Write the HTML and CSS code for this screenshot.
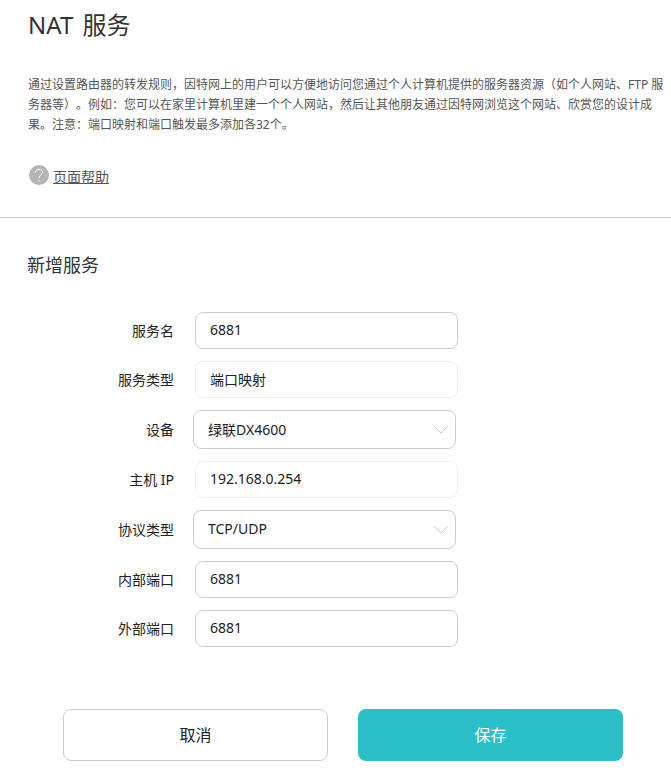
FILE: index.html
```html
<!DOCTYPE html>
<html lang="zh-CN">
<head>
  <meta charset="UTF-8" />
  <meta name="viewport" content="width=device-width, initial-scale=1.0" />
  <title>NAT 服务</title>
  <link rel="stylesheet" href="styles.css">
</head>
<body>
  <div class="intro">
    <h1>NAT 服务</h1>
    <p class="desc">通过设置路由器的转发规则，因特网上的用户可以方便地访问您通过个人计算机提供的服务器资源（如个人网站、FTP 服务器等）。例如：您可以在家里计算机里建一个个人网站，然后让其他朋友通过因特网浏览这个网站、欣赏您的设计成果。注意：端口映射和端口触发最多添加各32个。</p>
    <div class="help">
      <svg class="help-icon" width="20" height="20" viewBox="0 0 20 20">
        <circle cx="10" cy="10" r="10" fill="#b4b4b4"/>
        <path d="M6.5 7.6c0-2 1.5-3.3 3.5-3.3s3.5 1.2 3.5 3c0 2.6-3.4 2.8-3.4 5.5v.6" fill="none" stroke="#fff" stroke-width="1"/>
        <path d="M10.1 15v1.4" fill="none" stroke="#fff" stroke-width="1"/>
      </svg>
      <a href="#" class="help-link">页面帮助</a>
    </div>
  </div>

  <form class="service-form">
    <h2>新增服务</h2>
    <div class="rows">
      <div class="row">
        <label>服务名</label>
        <input type="text" value="6881">
      </div>
      <div class="row">
        <label>服务类型</label>
        <input type="text" class="readonly" value="端口映射" readonly>
      </div>
      <div class="row">
        <label>设备</label>
        <div class="select">
          <span>绿联DX4600</span>
          <svg width="16" height="9" viewBox="0 0 16 9"><path d="M1 1l7 7 7-7" fill="none" stroke="#c8c8c8" stroke-width="1"/></svg>
        </div>
      </div>
      <div class="row">
        <label>主机 IP</label>
        <input type="text" class="readonly" value="192.168.0.254" readonly>
      </div>
      <div class="row">
        <label>协议类型</label>
        <div class="select">
          <span>TCP/UDP</span>
          <svg width="16" height="9" viewBox="0 0 16 9"><path d="M1 1l7 7 7-7" fill="none" stroke="#c8c8c8" stroke-width="1"/></svg>
        </div>
      </div>
      <div class="row">
        <label>内部端口</label>
        <input type="text" value="6881">
      </div>
      <div class="row">
        <label>外部端口</label>
        <input type="text" value="6881">
      </div>
    </div>
    <div class="buttons">
      <button type="button" class="btn-cancel">取消</button>
      <button type="button" class="btn-save">保存</button>
    </div>
  </form>
</body>
</html>
```

FILE: styles.css
```css
body, html {
  margin: 0;
  background-color: #fff;
  font-family: "Noto Sans", "Noto Sans CJK SC", sans-serif;
  color: #222;
}
.intro {
  padding: 9px 0 0 28px;
  height: 208px;
  border-bottom: 1px solid #ccc;
}
h1 {
  margin: 0;
  font-size: 24px;
  font-weight: 400;
  line-height: 32px;
  word-spacing: 3px;
  color: #333;
}
.desc {
  margin: 34px 0 0 0;
  width: 640px;
  font-size: 12px;
  line-height: 20px;
  color: #555;
  text-spacing-trim: space-all;
}
.help {
  display: flex;
  align-items: center;
  margin: 30px 0 0 1px;
}
.help-icon {
  margin-bottom: 1px;
}
.help-link {
  margin-left: 4px;
  font-size: 14px;
  color: #555;
}
.service-form {
  padding: 0 0 0 27px;
}
h2 {
  margin: 34px 0 0 0;
  font-size: 18px;
  font-weight: 400;
  line-height: 26px;
  color: #333;
}
.rows {
  display: flex;
  flex-direction: column;
  gap: 12px;
  margin-top: 34px;
}
.row {
  display: flex;
  align-items: center;
}
.row label {
  width: 147px;
  margin-right: 21px;
  padding-bottom: 2px;
  text-align: right;
  font-size: 14px;
  color: #222;
}
.row input {
  width: 263px;
  height: 37px;
  padding: 0 14px 2px;
  border: 1px solid #ccc;
  border-radius: 8px;
  box-sizing: border-box;
  font-family: inherit;
  font-size: 14px;
  color: #222;
  outline: none;
}
.row input.readonly {
  border-color: #f0f0f0;
}
.select {
  display: flex;
  align-items: center;
  justify-content: space-between;
  width: 263px;
  height: 39px;
  margin-left: -2px;
  padding: 0 6px 0 14px;
  border: 1px solid #ccc;
  border-radius: 8px;
  box-sizing: border-box;
  font-size: 14px;
  color: #222;
}
.select span {
  padding-bottom: 2px;
}
.buttons {
  display: flex;
  gap: 30px;
  margin: 62px 0 0 36px;
}
.buttons button {
  width: 265px;
  height: 52px;
  padding-bottom: 4px;
  border-radius: 8px;
  font-family: inherit;
  font-size: 16px;
  cursor: pointer;
}
.btn-cancel {
  background-color: #fff;
  border: 1px solid #ccc;
  color: #222;
}
.btn-save {
  background-color: #2bc0c8;
  border: none;
  color: #fff;
}
```
